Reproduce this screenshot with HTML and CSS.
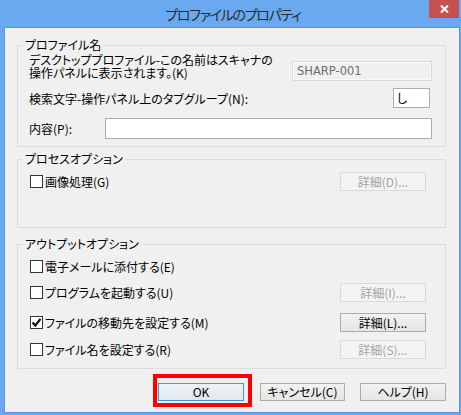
FILE: index.html
```html
<!DOCTYPE html>
<html lang="ja">
<head>
<meta charset="utf-8">
<title>プロファイルのプロパティ</title>
<link rel="stylesheet" href="styles.css">
</head>
<body>
<div class="window">
  <div class="titlebar">
    <span class="title">プロファイルのプロパティ</span>
    <span class="close"><svg width="9" height="8" viewBox="0 0 9 8"><path d="M1 0.5 L8 7.5 M8 0.5 L1 7.5" stroke="#fff" stroke-width="2" fill="none"/></svg></span>
  </div>
  <div class="client">
    <section class="group g1">
      <div class="legend">プロファイル名</div>
      <div class="row name-row">
        <div class="desc">デスクトッププロファイル-この名前はスキャナの<br>操作パネルに表示されます。(K)</div>
        <div class="field field-disabled name-field">SHARP-001</div>
      </div>
      <div class="row search-row">
        <span>検索文字-操作パネル上のタブグループ(N):</span>
        <div class="field short-field">し</div>
      </div>
      <div class="row content-row">
        <span>内容(P):</span>
        <div class="field long-field"></div>
      </div>
    </section>

    <section class="group g2">
      <div class="legend">プロセスオプション</div>
      <div class="row opt-row r-first">
        <label class="check"><span class="box"></span>画像処理(G)</label>
        <button class="btn detail disabled">詳細(D)...</button>
      </div>
    </section>

    <section class="group g3">
      <div class="legend">アウトプットオプション</div>
      <div class="row opt-row r1">
        <label class="check"><span class="box"></span>電子メールに添付する(E)</label>
      </div>
      <div class="row opt-row r2">
        <label class="check"><span class="box"></span>プログラムを起動する(U)</label>
        <button class="btn detail disabled">詳細(I)...</button>
      </div>
      <div class="row opt-row r3">
        <label class="check"><span class="box checked"><svg width="11" height="11" viewBox="0 0 11 11"><path d="M1.5 5.5 L4.3 8.5 L9.5 1.8" stroke="#111" stroke-width="2.2" fill="none"/></svg></span>ファイルの移動先を設定する(M)</label>
        <button class="btn detail">詳細(L)...</button>
      </div>
      <div class="row opt-row r4">
        <label class="check"><span class="box"></span>ファイル名を設定する(R)</label>
        <button class="btn detail disabled">詳細(S)...</button>
      </div>
    </section>

    <div class="actions">
      <button class="btn action default highlight">OK</button>
      <button class="btn action cancel">キャンセル(C)</button>
      <button class="btn action help">ヘルプ(H)</button>
    </div>
  </div>
</div>
</body>
</html>
```
FILE: styles.css
```css
* { box-sizing: border-box; }

body {
  margin: 0;
  width: 461px;
  height: 415px;
  overflow: hidden;
  background: #6aa9f0;
  font-family: "Noto Sans CJK JP", "Noto Sans", sans-serif;
  font-size: 12px;
  font-feature-settings: "palt" 1;
  color: #000;
}

.window {
  height: 415px;
  padding: 0 1px 2px 4px;
  display: flex;
  flex-direction: column;
}

.titlebar {
  height: 27px;
  position: relative;
  display: flex;
  align-items: center;
  justify-content: center;
  flex: none;
}

.title {
  font-size: 14px;
  letter-spacing: -1.3px;
  line-height: 1;
  color: #2b2b2b;
  margin-left: 2px;
}

.close {
  position: absolute;
  top: 0;
  right: 1px;
  width: 30px;
  height: 18px;
  background: #c75050;
  display: flex;
  align-items: center;
  justify-content: center;
}

.client {
  flex: 1;
  background: #f0f0f0;
  border: 1px solid #5b97de;
  padding: 17px 13px 0 12px;
}

.group {
  border: 1px solid #dcdcdc;
  padding-left: 11px;
}

.legend {
  margin: -8px 0 0 -6px;
  padding: 0 2px;
  width: max-content;
  line-height: 14px;
  background: #f0f0f0;
}

.row {
  display: flex;
  align-items: center;
}

/* group 1 */
.g1 { padding-right: 13px; padding-bottom: 7px; }

.name-row { align-items: flex-start; margin-top: 1px; }
.desc { line-height: 13px; white-space: nowrap; }

.field {
  height: 20px;
  border: 1px solid #abadb3;
  background: #fff;
  line-height: 18px;
  padding-left: 3px;
}
.field-disabled {
  border-color: #d9d9d9;
  background: #f0f0f0;
  color: #6d6d6d;
  box-shadow: inset 0 0 0 1px #fafafa;
  font-family: "DejaVu Sans", sans-serif;
  font-size: 11.5px;
  padding-left: 4px;
}
.name-field { margin-left: auto; margin-top: 8px; width: 140px; }

.search-row { margin-top: 7px; }
.short-field { margin-left: auto; margin-right: 2px; width: 37px; }

.content-row { margin-top: 10px; }
.long-field { margin-left: auto; width: 327px; height: 21px; }

/* option groups */
.g2 { margin-top: 12px; padding-right: 19px; padding-bottom: 36px; }
.g3 { margin-top: 16px; padding-right: 19px; padding-bottom: 9px; }

.opt-row { height: 19px; padding-left: 1px; }
.r-first { margin-top: 6px; }
.r1 { margin-top: 6px; }
.r2 { margin-top: 7px; }
.r3 { margin-top: 11px; }
.r4 { margin-top: 8px; }

.check {
  display: flex;
  align-items: center;
  line-height: 14px;
}

.box {
  width: 13px;
  height: 13px;
  border: 1px solid #333;
  background: #fff;
  margin-right: 2px;
  display: flex;
  align-items: center;
  justify-content: center;
}

.btn {
  font: inherit;
  height: 19px;
  padding: 0;
  border: 1px solid #acacac;
  background: linear-gradient(#f2f2f2, #e5e5e5);
  color: #000;
  line-height: 16px;
  display: flex;
  align-items: center;
  justify-content: center;
}
.btn.disabled {
  border-color: #d9d9d9;
  background: #f4f4f4;
  color: #a3a3a3;
}

.detail { margin-left: auto; width: 86px; }

.actions {
  display: flex;
  justify-content: flex-end;
  margin-top: 14px;
}

.action { height: 18px; width: 86px; }
.cancel { width: 85px; margin-left: 16px; }
.help { margin-left: 15px; }

.default {
  border-color: #3c9ae8;
  background: linear-gradient(#eef2f6, #e3e8ed);
}

.highlight { position: relative; }
.highlight::after {
  content: "";
  position: absolute;
  left: -6px;
  right: -9px;
  top: -10px;
  bottom: -7px;
  border: 4px solid #f00;
}
```
